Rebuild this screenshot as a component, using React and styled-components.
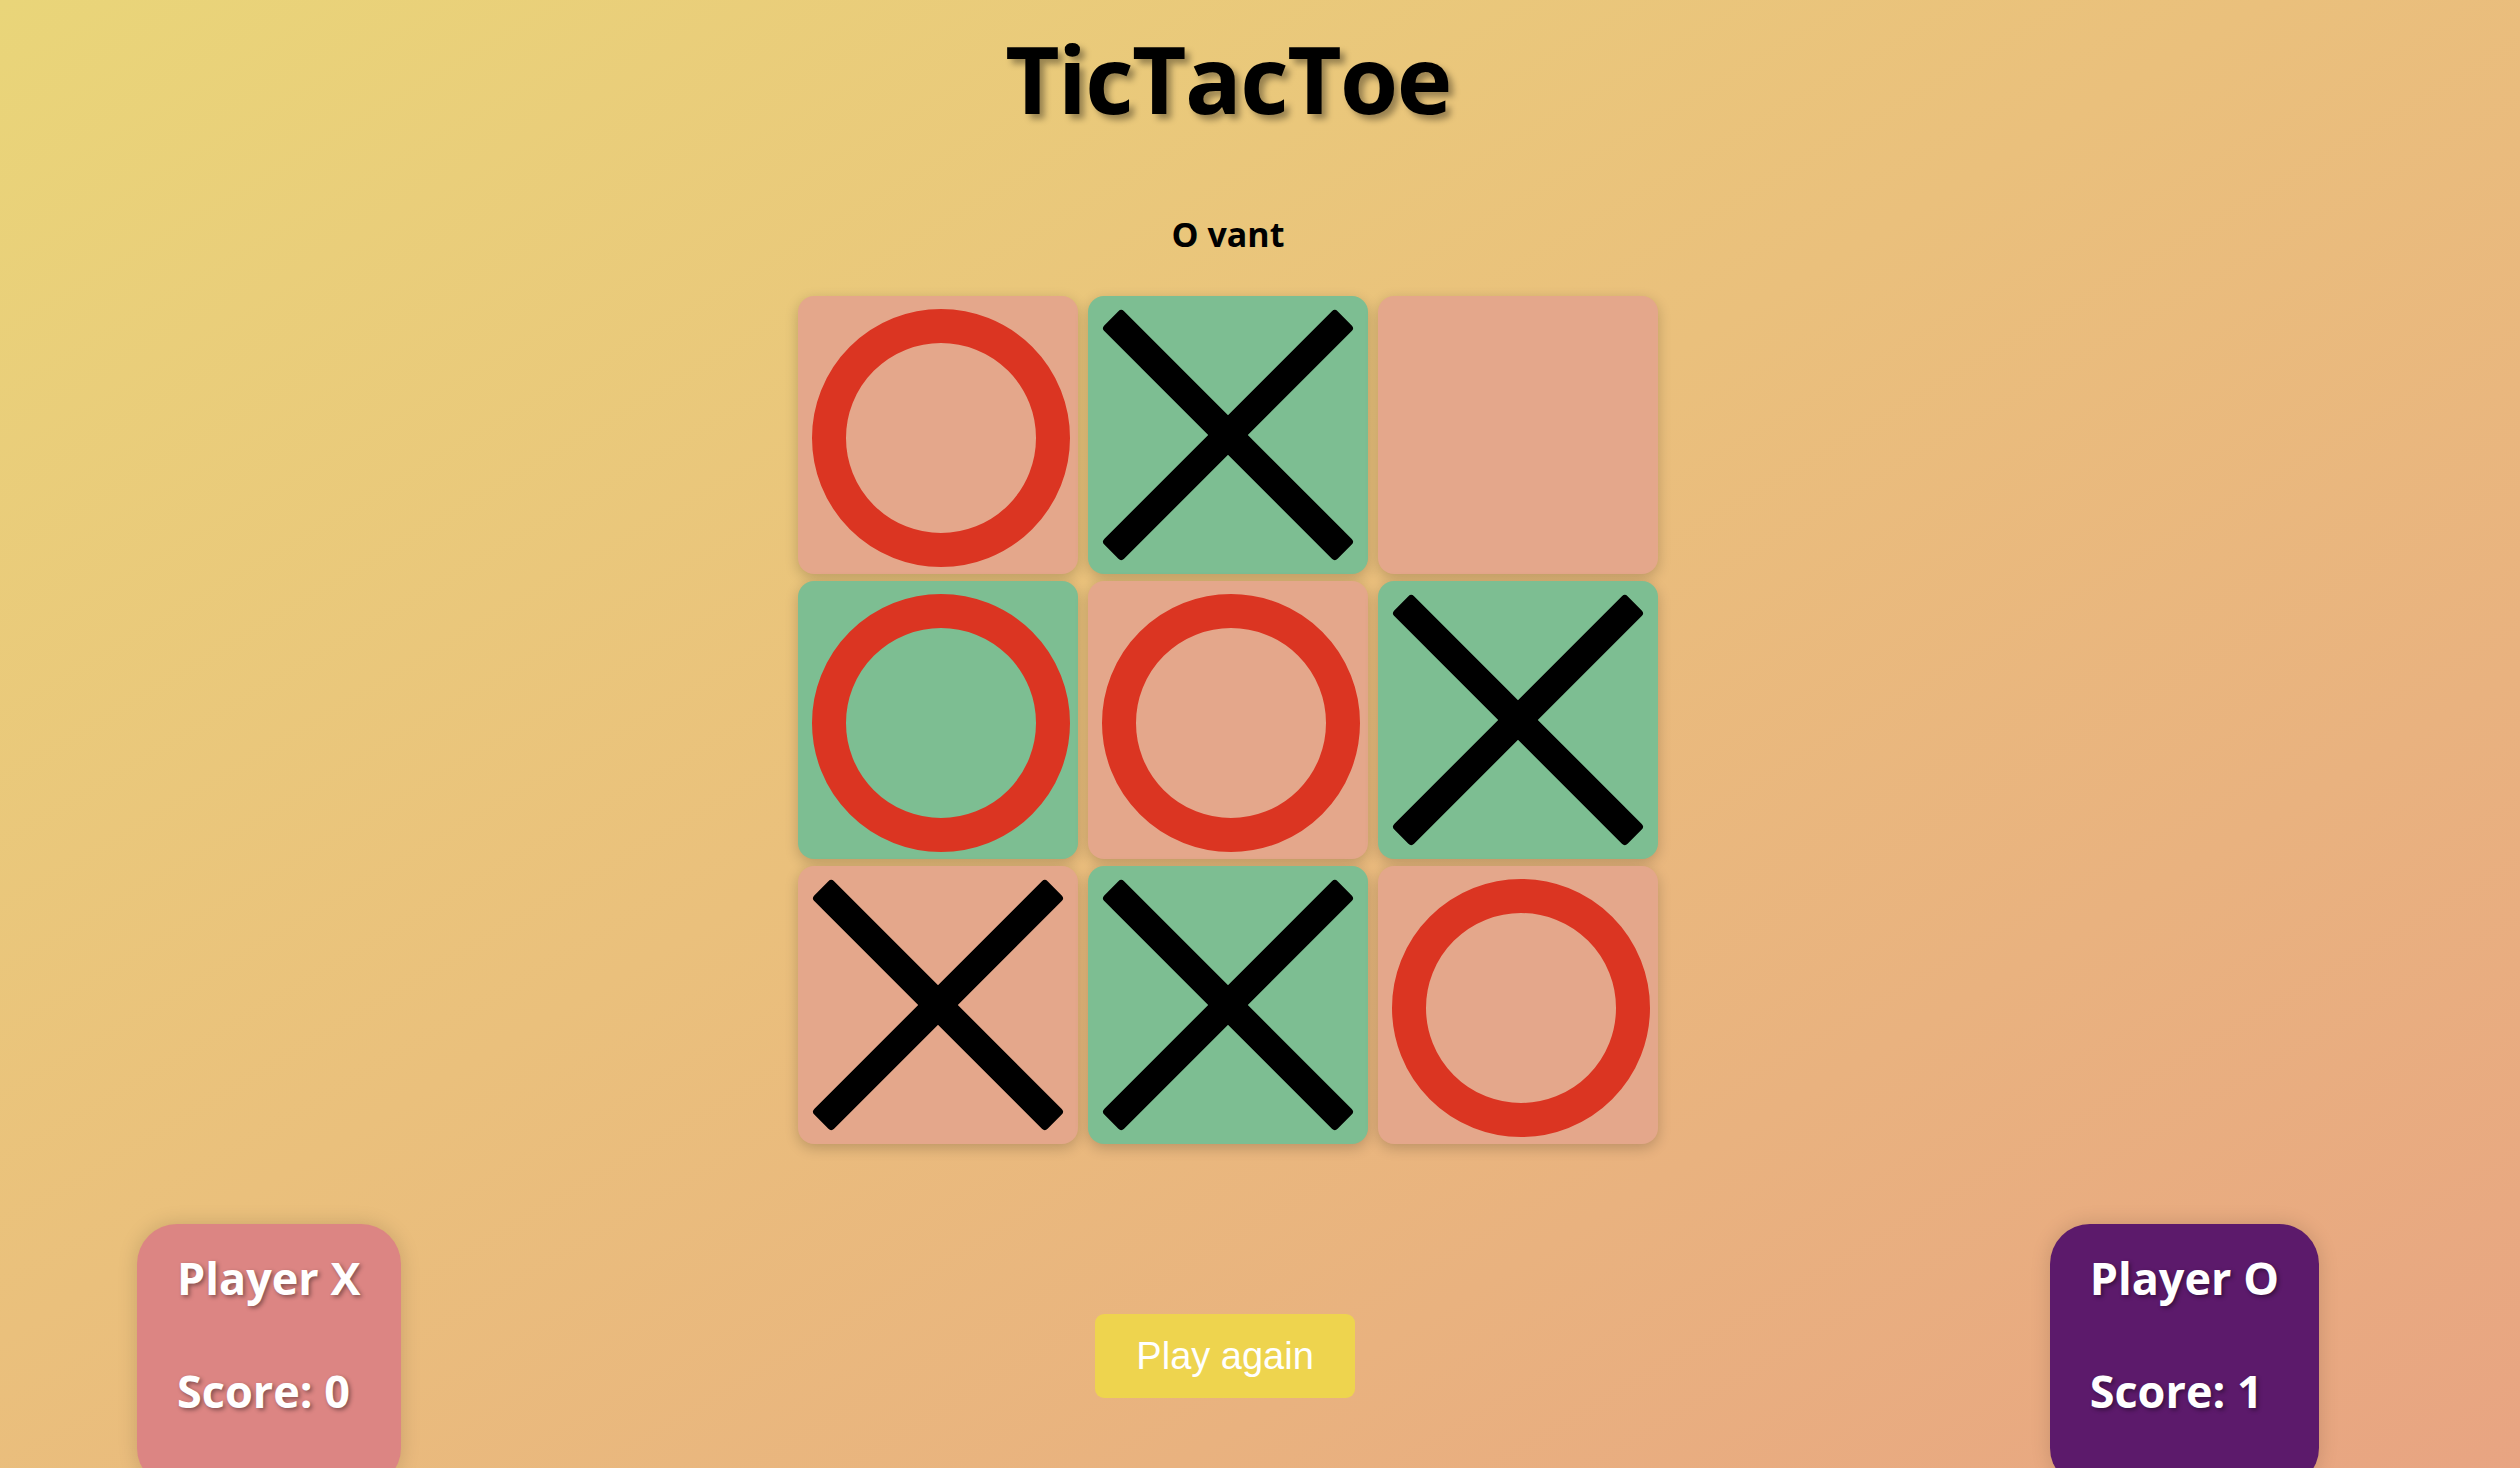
import React from 'react'
import styled, { createGlobalStyle } from 'styled-components'

const GlobalStyle = createGlobalStyle`
  html, body { margin: 0; padding: 0; overflow: hidden; }
  body {
    font-family: "Open Sans", "Noto Sans", sans-serif;
    background: linear-gradient(to bottom right, #e9d579 0%, #eac07c 45%, #e8a482 100%);
    min-height: 100vh;
  }
`

const board = [
  'O', 'X', '',
  'O', 'O', 'X',
  'X', 'X', 'O',
]

const Mark = ({ value }) => {
  if (value === 'O') {
    return (
      <svg width="280" height="278" viewBox="0 0 280 278">
        <circle cx="143" cy="142" r="112" fill="none" stroke="#db3522" strokeWidth="34" />
      </svg>
    )
  }
  if (value === 'X') {
    return (
      <svg width="280" height="278" viewBox="0 0 280 278">
        <rect x="-25" y="125" width="330" height="28" rx="4" fill="#000" transform="rotate(45 140 139)" />
        <rect x="-25" y="125" width="330" height="28" rx="4" fill="#000" transform="rotate(-45 140 139)" />
      </svg>
    )
  }
  return null
}

const App = () => {
  return (
    <Page>
      <GlobalStyle />

      <Title>TicTacToe</Title>

      <Status>O vant</Status>

      <Board>
        {board.map((v, i) => (
          <Cell key={i} $green={i % 2 === 1}>
            <Mark value={v} />
          </Cell>
        ))}
      </Board>

      <Footer>
        <PlayerCard $color="#dc8583">
          <PlayerText>Player X</PlayerText>
          <PlayerText>Score: 0</PlayerText>
        </PlayerCard>

        <Button>Play again</Button>

        <PlayerCard $color="#5c1a6b">
          <PlayerText>Player O</PlayerText>
          <PlayerText>Score: 1</PlayerText>
        </PlayerCard>
      </Footer>
    </Page>
  )
}

export default App

const Page = styled.div`display:flex; flex-direction:column; align-items:center; width:2182px; margin-left:137px`

const Title = styled.h1`margin:14px 0 0; font-size:94px; font-weight:700; color:#000; letter-spacing:-1.5px; text-shadow:5px 5px 6px rgba(0,0,0,0.35)`

const Status = styled.h3`margin:69px 0 0; font-size:34px; font-weight:700; color:#000`

const Board = styled.div`display:grid; grid-template-columns:repeat(3, 280px); grid-auto-rows:278px; column-gap:10px; row-gap:7px; margin-top:39px`

const Cell = styled.div`display:flex; align-items:center; justify-content:center; border-radius:16px; background:${p => p.$green ? '#7dbe92' : '#e4a78b'}; box-shadow:0 4px 14px rgba(0,0,0,0.2); overflow:hidden`

const Footer = styled.div`display:flex; align-self:stretch; justify-content:space-between; align-items:center; margin-top:80px`

const PlayerCard = styled.div`display:flex; flex-direction:column; gap:52px; padding:23px 40px 67px; border-radius:40px; background:${p => p.$color}; box-shadow:0 0 20px rgba(0,0,0,0.15)`

const PlayerText = styled.h2`margin:0; font-size:45px; font-weight:700; color:#fff; white-space:nowrap; text-shadow:2px 2px 4px rgba(0,0,0,0.4)`

const Button = styled.button`font-family:"Liberation Sans", Arial, sans-serif; font-size:38px; color:#fff; background:#eed44e; border:none; border-radius:9px; width:260px; height:84px; padding:0; cursor:pointer`
